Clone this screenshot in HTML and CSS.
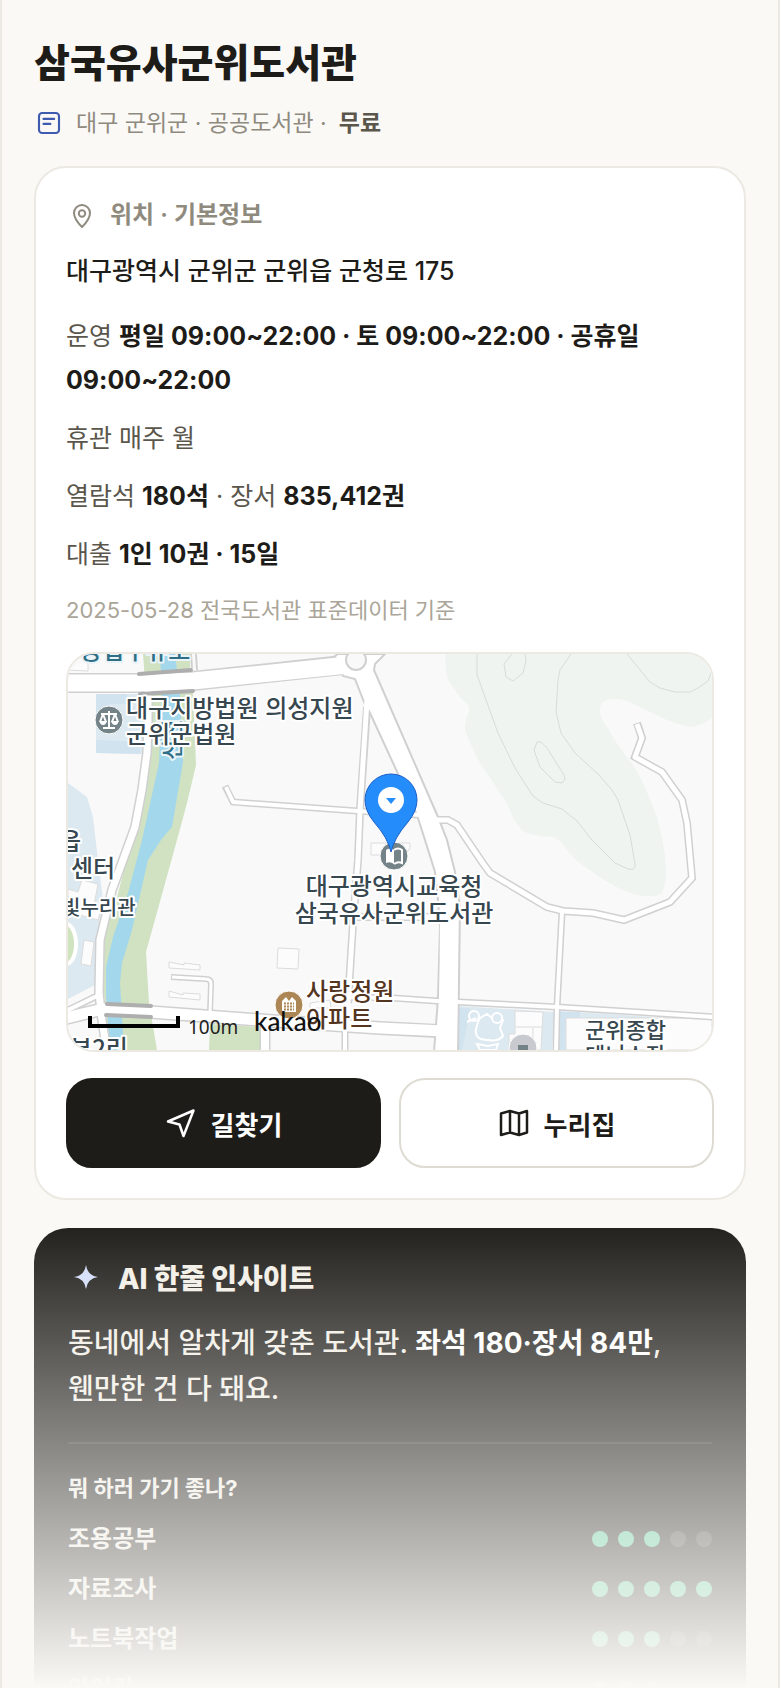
FILE: index.html
```html
<!DOCTYPE html>
<html lang="ko">
<head>
<meta charset="utf-8">
<meta name="viewport" content="width=device-width, initial-scale=1">
<title>삼국유사군위도서관</title>
<link rel="stylesheet" href="styles.css">
</head>
<body>
<main class="screen">
  <header class="head">
    <h1 class="title">삼국유사군위도서관</h1>
    <p class="meta">
      <svg class="icon icon-doc" viewBox="0 0 24 24" aria-hidden="true"><rect x="4" y="4" width="16" height="16" rx="2.5"/><path d="M7.6 8.700h8.500M7.600 12.700h5.500"/></svg>
      <span>대구 군위군 · 공공도서관 ·</span>
      <strong class="free">무료</strong>
    </p>
  </header>

  <section class="card">
    <h2 class="card-title">
      <svg class="icon icon-pin" viewBox="0 0 32 32" aria-hidden="true"><path d="M16 28C12.500 24.500 8 20 8 14a8 8 0 0 1 16 0C24 20 19.500 24.500 16 28z"/><circle cx="16" cy="14.500" r="3.200"/></svg>
      위치 · 기본정보
    </h2>
    <p class="address">대구광역시 군위군 군위읍 군청로 175</p>
    <ul class="facts">
      <li>운영 <strong>평일 09:00~22:00 · 토 09:00~22:00 · 공휴일 09:00~22:00</strong></li>
      <li>휴관 매주 월</li>
      <li>열람석 <strong>180석</strong> · 장서 <strong>835,412권</strong></li>
      <li>대출 <strong>1인 10권 · 15일</strong></li>
    </ul>
    <p class="source">2025-05-28 전국도서관 표준데이터 기준</p>

    <div class="map">
      <svg class="map-svg" viewBox="68 654 644 396" role="img" aria-label="지도">
        <rect class="land" x="68" y="654" width="644" height="396"/>
        <path class="forest" d="M445 654L446 672Q448 682 453 687Q460 698 468 705Q470 708 469 712Q464 722 465 730Q470 745 480 763L507 803Q512 818 518 825Q522 831 527 833Q540 837 553 837Q560 840 563 845Q576 862 587 868Q605 882 623 890Q634 895 643 896Q658 897 662 893Q666 885 666 870Q664 830 650 800Q643 780 633 765Q615 742 607 727Q600 718 600 712Q600 703 603 702Q608 699 615 699Q622 699 627 701L667 720Q682 726 693 727Q704 724 713 717V654z"/>
        <g class="contour">
          <path d="M477 654V675L498 733L515 768L533 796L543 803L562 809L577 821L591 839L615 863L628 869Q636 871 635 864L630 835L618 800L612 790L598 774L575 753L561 733L556 712L558 680L560 670L571 654"/>
          <path d="M512 654L504 664L506 677L513 681L523 673L526 661L525 654"/>
          <path d="M537 742H541L547 748L564 775L565 779L562 783L555 782L540 767L534 750z"/>
          <path d="M627 654L650 682L660 688L675 692H690L698 688L708 681L713 668"/>
        </g>
        <path class="bank" d="M143 654H190V668L193 695L196 765L187 803L177 840L146 952L149 1003L157 1050H110L104 993L103 937L117 897L132 840L150 753L144 668z"/>
        <path class="water" d="M160 654H175L180 695L183 762L172 827L161 840L148 860L132 930L122 963L120 983L124 1050H110L106 995V967L113 937L128 893L142 840L159 763L162 695z"/>
        <path class="bank" d="M210 1024L260 1027V1050H209z"/>
        <g class="campus">
          <path d="M96 694V753L143 754L148 694z"/>
          <path d="M68 783L87 797L93 817L98 860L103 900L96 940L95 985L68 999z"/>
          <path d="M459 1006L555 1012L552 1050H456z"/>
          <path d="M560 1011L654 1017V1050H558z"/>
        </g>
        <g class="block">
          <path d="M96 694V720H110V704H127V694zM96 740L140 742V754L96 753z"/>
          <path d="M459 1008H470L464 1040L462 1050H456zM560 1012H580V1018H566V1050H558z"/>
        </g>
        <g class="building">
          <path d="M82 880L98 884L94 905L102 907L98 920L76 914L80 900L68 897V889L78 892z"/>
          <path d="M84 940L94 942L91 966L81 964z"/>
          <path d="M278 948L299 949L298 969L277 968z"/>
          <path d="M169 962L184 965V963L200 965V970L169 968z"/>
          <path d="M169 991L183 995V993L200 994V1000L169 997z"/>
          <path d="M371 843H410V848L405 855H371z"/>
          <path d="M515 1011L543 1012L541 1050H509V1034H515zM515 1027H542M533 1028V1050"/>
          <path d="M566 1018H712V1050H566z"/>
          <path d="M68 670L88 671V660"/>
          <path d="M310 1003L330 1000L331 1008H310z"/>
        </g>
        <ellipse class="track" cx="66" cy="944" rx="10" ry="20"/>
        <g class="casing">
          <path stroke-width="10" d="M148 690V720L147 753L142 790L135 827L123 860L112 890L100 940L99 993L102 1020L107 1052"/>
          <path stroke-width="7" d="M99 995L64 1012"/>
          <path stroke-width="8" d="M367 707L360 810L358 860L353 923L348 1003"/>
          <path stroke-width="7" d="M225 786L233 802L357 811L417 815"/>
          <path stroke-width="8" d="M355 917L442 917"/>
          <path stroke-width="8" d="M439 820H448L457 825L482 862L490 873L547 907L563 911L593 913L624 920L670 902L692 878L687 823L682 800L662 772L635 757L642 738L637 723"/>
          <path stroke-width="7" d="M562 912L557 1007L556 1052"/>
          <path stroke-width="7" d="M340 997L393 998L437 1001L458 1002L557 1007L714 1017"/>
          <path stroke-width="6" d="M171 977L206 979Q211 979 211 984L210 1012"/>
          <path stroke-width="11" d="M265 1020V1052"/>
          <path stroke-width="7" d="M345 1030V1052"/>
          <path stroke-width="14" d="M66 1018L103 1009L150 1012L273 1021L380 1028L438 1031"/>
          <path stroke-width="20" d="M66 683H138L193 681L343 665"/>
          <path stroke-width="2" d="M197 670L196 654M192 668L191 654"/>
          <path fill="#fff" stroke-width="2" d="M335 656L338 654H385L375 664L374 670L438 817L447 840L455 872L460 907L458 1052H434L438 998L440 927L438 900L435 872L425 840L417 815L370 713L364 702L355 679L343 676z"/>
        </g>
        <g class="road">
          <path stroke-width="7" d="M148 690V720L147 753L142 790L135 827L123 860L112 890L100 940L99 993L102 1020L107 1052"/>
          <path stroke-width="4" d="M99 995L64 1012"/>
          <path stroke-width="5" d="M367 700L360 810L358 860L353 923L348 1003L347 1022"/>
          <path stroke-width="4" d="M226 787L233 802L357 811L420 815"/>
          <path stroke-width="5" d="M353 917L445 917"/>
          <path stroke-width="5" d="M436 820H448L457 825L482 862L490 873L547 907L563 911L593 913L624 920L670 902L692 878L687 823L682 800L662 772L635 757L642 738L637 724"/>
          <path stroke-width="4" d="M562 912L557 1007L556 1052"/>
          <path stroke-width="4" d="M340 997L393 998L437 1001L458 1002L557 1007L714 1017"/>
          <path stroke-width="3" d="M172 977L206 979Q211 979 211 984L210 1014"/>
          <path stroke-width="8" d="M265 1018V1052"/>
          <path stroke-width="4" d="M345 1028V1052"/>
          <path stroke-width="11" d="M66 1018L103 1009L150 1012L273 1021L380 1028L444 1031"/>
          <path stroke-width="17" d="M66 683H138L193 681L348 665"/>
          <path stroke-width="18" d="M449 915L448 1050"/>
          <path stroke-width="12" d="M360 668L392 735"/>
        </g>
        <circle class="island" cx="356" cy="660" r="10"/>
        <path class="bridge" d="M139 674L191 670M140 694L193 691M107 1004L151 1006M106 1015L151 1017"/>
        <g class="pool">
          <path d="M480 1018L487 1014L492 1018H497L503 1020L500 1028L503 1036Q498 1042 488 1040Q474 1040 476 1029L478 1022z"/>
          <circle cx="474" cy="1016" r="5"/><circle cx="497" cy="1018" r="5"/>
          <path d="M467 1022L476 1018M477 1044L488 1046L498 1044L496 1050H480z"/>
        </g>
        <g class="poi">
          <circle cx="109" cy="720" r="14"/>
          <circle cx="394" cy="856" r="14"/>
          <circle class="poi-apt" cx="289" cy="1005" r="14"/>
          <circle class="poi-off" cx="523" cy="1048" r="14"/>
        </g>
        <path class="glyph" d="M109 711V727M103 728H115M101 714H117M103 714L100 722M103 714L106 722M115 714L112 722M115 714L118 722"/>
        <path class="glyph-fill" d="M99.500 721H107Q106 725 103 725Q100 725 99.500 721zM111 721H118.500Q118 725 115 725Q112 725 111 721z"/>
        <path class="glyph-fill" d="M386 850Q390 847 394 850V864Q390 861 386 863z"/>
        <path class="glyph" d="M394 850Q398 847 402 850V863Q398 861 394 864"/>
        <path class="glyph-fill" d="M282 1012V1001L286 997L289 1001L292 997L296 1001V1012z"/>
        <path class="windows" d="M284 1003.500H294M284 1006.500H294M284 1009.500H294"/>
        <rect x="518" y="1045" width="10" height="6" fill="#748388"/>
        <g class="label label-water">
          <text x="80" y="659">농업구유도</text>
          <text class="label-side" transform="translate(180 760) rotate(-90)">신천</text>
        </g>
        <g class="label">
          <text x="126" y="717">대구지방법원 의성지원</text>
          <text x="126" y="743">군위군법원</text>
          <text x="59" y="850">읍</text>
          <text x="71" y="877">센터</text>
          <text x="394" y="895" text-anchor="middle">대구광역시교육청</text>
          <text x="394" y="922" text-anchor="middle">삼국유사군위도서관</text>
          <text x="48" y="1057">서부2리</text>
        </g>
        <g class="label label-small">
          <text x="62" y="915">빛누리관</text>
        </g>
        <g class="label label-court">
          <text x="585" y="1038">군위종합</text>
          <text x="585" y="1063">테니스장</text>
        </g>
        <g class="label label-apt">
          <text x="306" y="1000">사랑정원</text>
          <text x="306" y="1027">아파트</text>
        </g>
        <path class="pin" d="M391 852Q388 838 374 822Q365 811 365 800A26 26 0 0 1 417 800Q417 811 408 822Q394 838 391 852z"/>
        <circle cx="391" cy="800" r="13" fill="#fff"/>
        <path d="M386 798H396L391 804z" fill="#258cfb"/>
        <path class="scale" d="M90 1016V1026H178V1016"/>
        <text class="scale-text" x="188" y="1034">100m</text>
        <text class="brand" x="254" y="1031">kakao</text>
      </svg>
    </div>

    <div class="actions">
      <button class="btn btn-dark" type="button">
        <svg class="icon icon-btn" viewBox="0 0 32 32" aria-hidden="true"><path d="M3 14.500L28.500 3.500L18.500 29L14.500 17.500z"/></svg>
        길찾기
      </button>
      <a class="btn btn-light" href="#site">
        <svg class="icon icon-btn" viewBox="0 0 32 32" aria-hidden="true"><path d="M3 6.500L12 4L21 6.500L29 4V25.500L21 28L12 25.500L3 28zM12 4V25.500M21 6.500V28"/></svg>
        누리집
      </a>
    </div>
  </section>

  <section class="insight">
    <h2 class="insight-title">
      <svg class="star" viewBox="0 0 36 36" aria-hidden="true"><path d="M18 4Q19.500 14.500 30 16Q19.500 17.500 18 28Q16.500 17.500 6 16Q16.500 14.500 18 4z"/></svg>
      AI 한줄 인사이트
    </h2>
    <p class="insight-text">동네에서 알차게 갖춘 도서관. <strong>좌석 180·장서 84만</strong>, 웬만한 건 다 돼요.</p>
    <h3 class="insight-sub">뭐 하러 가기 좋나?</h3>
    <ul class="scores">
      <li class="score"><span>조용공부</span><span class="dots"><i class="dot on"></i><i class="dot on"></i><i class="dot on"></i><i class="dot"></i><i class="dot"></i></span></li>
      <li class="score"><span>자료조사</span><span class="dots"><i class="dot on"></i><i class="dot on"></i><i class="dot on"></i><i class="dot on"></i><i class="dot on"></i></span></li>
      <li class="score"><span>노트북작업</span><span class="dots"><i class="dot on"></i><i class="dot on"></i><i class="dot on"></i><i class="dot"></i><i class="dot"></i></span></li>
      <li class="score"><span>아이랑</span><span class="dots"><i class="dot on"></i><i class="dot on"></i><i class="dot on"></i><i class="dot"></i><i class="dot"></i></span></li>
    </ul>
  </section>
  <div class="fade"></div>
</main>
</body>
</html>
```

FILE: styles.css
```css
* { box-sizing: border-box; }

body {
  margin: 0;
  background: #faf9f6;
  color: #1e1c18;
  font-family: Inter, "Noto Sans CJK KR", sans-serif;
  font-size: 24px;
  word-break: keep-all;
}

h1, h2, h3, p, ul { margin: 0; padding: 0; }
ul { list-style: none; }

.screen {
  position: relative;
  display: flex;
  flex-direction: column;
  height: 100vh;
  overflow: hidden;
  padding: 36px 32px 0;
  border: solid #ebe9e2;
  border-width: 0 2px;
}

.icon {
  flex: none;
  fill: none;
  stroke: currentColor;
  stroke-width: 2;
  stroke-linecap: round;
  stroke-linejoin: round;
}

/* Page header */
.head { flex: none; margin-bottom: 26px; }
.title { font-size: 39px; line-height: 54px; font-weight: 800; }
.meta {
  display: flex;
  align-items: center;
  gap: 12px;
  margin-top: 16px;
  line-height: 34px;
  font-size: 23px;
  color: #8f8a7e;
}
.icon-doc { width: 30px; height: 30px; color: #3f5bb0; stroke-width: 1.7; }
.free { color: #5a564c; font-weight: 600; }

/* Location card */
.card {
  flex: none;
  padding: 30px;
  border: 2px solid #ebe9e2;
  border-radius: 32px;
  background: #fff;
}
.card-title {
  display: flex;
  align-items: center;
  gap: 12px;
  font-size: 24px;
  line-height: 34px;
  font-weight: 600;
  color: #8f8a7e;
}
.icon-pin { width: 32px; height: 32px; }
.address { margin-top: 20px; font-size: 25px; line-height: 38px; font-weight: 500; }
.facts {
  display: flex;
  flex-direction: column;
  gap: 14px;
  margin-top: 24px;
  font-size: 25px;
  line-height: 44px;
  color: #5a564c;
}
.facts strong { color: #1e1c18; font-weight: 700; }
.source { margin-top: 18px; font-size: 22px; line-height: 32px; color: #aaa598; }

/* Map */
.map {
  margin-top: 26px;
  overflow: hidden;
  border: 2px solid #ebe9e2;
  border-radius: 28px;
}
.map-svg { display: block; width: 100%; height: auto; }
.land { fill: #f9f9f9; }
.forest { fill: #eff4f1; }
.contour { fill: none; stroke: #d6dcd8; stroke-width: 1; }
.bank { fill: #d0e2c1; }
.water { fill: #a3d7eb; }
.campus { fill: #dce9f1; }
.block { fill: #d0e3ef; }
.building { fill: #fcfcfc; stroke: #dcdcdc; stroke-width: 1; }
.track { fill: #cfe3bf; stroke: #fff; stroke-width: 4; }
.casing { fill: none; stroke: #d0d0d0; }
.road { fill: none; stroke: #fff; stroke-linejoin: round; }
.island { fill: #f9f9f9; stroke: #d0d0d0; stroke-width: 2; }
.bridge { fill: none; stroke: #aeaeae; stroke-width: 4; stroke-linecap: round; }
.pool { fill: #dce9f1; stroke: #fff; stroke-width: 2; }
.poi { fill: #748388; stroke: #fff; stroke-width: 1; }
.poi-apt { fill: #ac8755; }
.poi-off { fill: #c8cacf; }
.glyph { fill: none; stroke: #fff; stroke-width: 2; }
.glyph-fill { fill: #fff; }
.windows { fill: none; stroke: #ac8755; stroke-width: 2; stroke-dasharray: 2 1; }
.label {
  font-family: "Noto Sans CJK KR", sans-serif;
  font-size: 24px;
  font-weight: 500;
  fill: #37474f;
  stroke: #fff;
  stroke-width: 4;
  stroke-linejoin: round;
  paint-order: stroke;
}
.label-small { font-size: 20px; }
.label-court, .label-side { font-size: 22px; }
.label-water { fill: #2f6f86; stroke: #eaf4f8; }
.label-apt { fill: #54351f; }
.pin { fill: #258cfb; stroke: #1b5fc9; stroke-width: 1; }
.scale { fill: none; stroke: #000; stroke-width: 4; }
.scale-text { font-family: "Noto Sans", sans-serif; font-size: 19px; fill: #222; }
.brand { font-family: Lato, sans-serif; font-size: 26px; font-weight: 500; fill: #111; }

/* Buttons */
.actions {
  display: grid;
  grid-template-columns: 1fr 1fr;
  gap: 18px;
  margin-top: 26px;
}
.btn {
  display: flex;
  align-items: center;
  justify-content: center;
  gap: 14px;
  height: 90px;
  border: 2px solid #1e1c18;
  border-radius: 26px;
  font: inherit;
  font-size: 26px;
  font-weight: 700;
  text-decoration: none;
}
.btn-dark { background: #1e1c18; color: #fff; }
.btn-light { border-color: #dedbd2; background: #fff; color: #1e1c18; }
.icon-btn { width: 32px; height: 32px; stroke-width: 2.5; }

/* Insight card */
.insight {
  flex: none;
  margin-top: 28px;
  padding: 30px 34px;
  border-radius: 34px;
  background: #1e1c18;
  color: #f2efe7;
}
.insight-title {
  display: flex;
  align-items: center;
  gap: 14px;
  font-size: 28px;
  line-height: 42px;
  font-weight: 800;
}
.star { flex: none; width: 36px; height: 36px; fill: #d3ddfb; }
.insight-text {
  margin-top: 20px;
  font-size: 28px;
  line-height: 46px;
  font-weight: 500;
}
.insight-text strong { color: #fff; font-weight: 700; }
.insight-sub {
  margin-top: 30px;
  padding-top: 28px;
  border-top: 2px solid #33312d;
  font-size: 22px;
  line-height: 32px;
  font-weight: 700;
}
.scores { display: flex; flex-direction: column; gap: 16px; margin-top: 18px; }
.score {
  display: flex;
  align-items: center;
  justify-content: space-between;
  line-height: 34px;
  font-weight: 600;
}
.dots { display: flex; gap: 10px; }
.dot { width: 16px; height: 16px; border-radius: 50%; background: #403e3a; }
.dot.on { background: #52c994; }

/* Bottom fade over the clipped content */
.fade {
  position: absolute;
  right: 0;
  bottom: 0;
  left: 0;
  height: 28%;
  background: linear-gradient(rgba(250, 249, 246, 0), #faf9f6);
  pointer-events: none;
}
```
